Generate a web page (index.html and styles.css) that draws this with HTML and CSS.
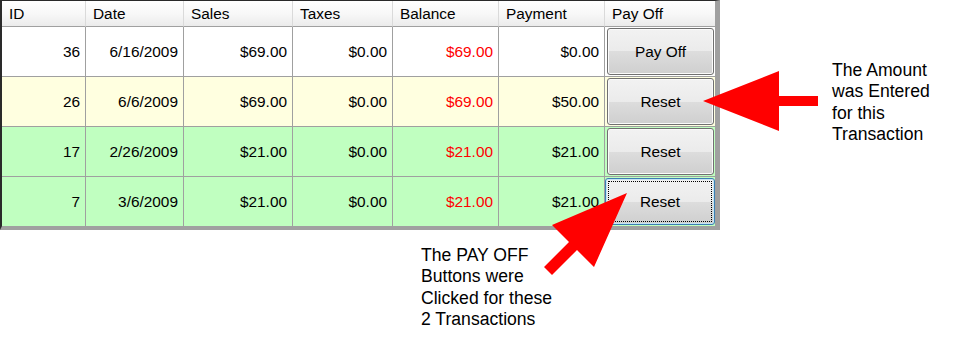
FILE: index.html
```html
<!DOCTYPE html>
<html lang="en">
<head>
<meta charset="utf-8">
<title>Transactions</title>
<link rel="stylesheet" href="styles.css">
</head>
<body>
<div class="canvas">
  <div class="top">
    <div class="grid">
      <div class="hd">ID</div>
      <div class="hd">Date</div>
      <div class="hd">Sales</div>
      <div class="hd">Taxes</div>
      <div class="hd">Balance</div>
      <div class="hd">Payment</div>
      <div class="hd last">Pay Off</div>

      <div class="cell white">36</div>
      <div class="cell white">6/16/2009</div>
      <div class="cell white">$69.00</div>
      <div class="cell white">$0.00</div>
      <div class="cell white red">$69.00</div>
      <div class="cell white">$0.00</div>
      <div class="cell white btncell"><button class="btn">Pay Off</button></div>

      <div class="cell yellow">26</div>
      <div class="cell yellow">6/6/2009</div>
      <div class="cell yellow">$69.00</div>
      <div class="cell yellow">$0.00</div>
      <div class="cell yellow red">$69.00</div>
      <div class="cell yellow">$50.00</div>
      <div class="cell yellow btncell"><button class="btn">Reset</button></div>

      <div class="cell green">17</div>
      <div class="cell green">2/26/2009</div>
      <div class="cell green">$21.00</div>
      <div class="cell green">$0.00</div>
      <div class="cell green red">$21.00</div>
      <div class="cell green">$21.00</div>
      <div class="cell green btncell"><button class="btn">Reset</button></div>

      <div class="cell green lastrow">7</div>
      <div class="cell green lastrow">3/6/2009</div>
      <div class="cell green lastrow">$21.00</div>
      <div class="cell green lastrow">$0.00</div>
      <div class="cell green lastrow red">$21.00</div>
      <div class="cell green lastrow">$21.00</div>
      <div class="cell green lastrow btncell"><button class="btn focused">Reset</button></div>
    </div>
    <p class="note note-amount">The Amount<br>was Entered<br>for this<br>Transaction</p>
  </div>
  <p class="note note-payoff">The PAY OFF<br>Buttons were<br>Clicked for these<br>2 Transactions</p>

  <svg class="arrows" width="953" height="339" viewBox="0 0 953 339" aria-hidden="true">
    <polygon fill="#ff0000" points="703,101 779,71 779,96 818,96 818,106 779,106 779,131"/>
    <polygon fill="#ff0000" points="627,193 552,225 569,242 544,267 552,275 577,250 594,267"/>
  </svg>
</div>
</body>
</html>
```

FILE: styles.css
```css
html, body {
  margin: 0;
  padding: 0;
  background: #ffffff;
}

body {
  font-family: "Liberation Sans", Arial, sans-serif;
  color: #000000;
}

.canvas {
  position: relative;
  width: 953px;
  height: 339px;
  overflow: hidden;
}

.top {
  display: flex;
  align-items: flex-start;
}

.grid {
  display: grid;
  grid-template-columns: 84px 98px 109px 100px 106px 106px 110px;
  grid-template-rows: 26px 50px 50px 50px 49px;
  border-top: 1px solid #2a2a2a;
  border-left: 2px solid #2a2a2a;
  border-right: 5px solid #a0a0a0;
  border-bottom: 4px solid #a0a0a0;
  font-size: 15.4px;
  flex: none;
}

.hd {
  box-sizing: border-box;
  display: flex;
  align-items: center;
  padding-left: 7px;
  background: linear-gradient(#ffffff 0%, #f7f7f7 55%, #ebebeb 100%);
  border-right: 1px solid #dadada;
  border-bottom: 1px solid #a0a0a0;
  white-space: nowrap;
}

.hd.last {
  border-right: none;
}

.cell {
  box-sizing: border-box;
  display: flex;
  align-items: center;
  justify-content: flex-end;
  padding-right: 5px;
  border-right: 1px solid #a0a0a0;
  border-bottom: 1px solid #a0a0a0;
  white-space: nowrap;
}

.cell.lastrow {
  border-bottom: none;
}

.white { background: #ffffff; }
.yellow { background: #ffffe0; }
.green { background: #c0ffc0; }

.red { color: #ff0000; }

.btncell {
  justify-content: flex-start;
  padding: 0 0 0 2px;
  border-right: none;
}

.btn {
  position: relative;
  box-sizing: border-box;
  width: 107px;
  height: 47px;
  margin: 0;
  padding: 0;
  font-family: "Liberation Sans", Arial, sans-serif;
  font-size: 15.4px;
  color: #000000;
  border: 1px solid #707070;
  border-radius: 3px;
  background: linear-gradient(#f2f2f2 0%, #ebebeb 50%, #dddddd 50%, #cfcfcf 100%);
  box-shadow: inset 0 0 0 1px #fbfbfb;
}

.btn.focused {
  width: 110px;
  margin-left: -2px;
  border-color: #3c7fb1;
  box-shadow: inset 0 0 0 1px #c4e5f6;
}

.btn.focused::after {
  content: "";
  position: absolute;
  left: 2px;
  top: 2px;
  right: 2px;
  bottom: 2px;
  border: 1px dotted #000000;
}

.note {
  margin: 0;
  font-size: 17.6px;
  line-height: 21.3px;
  color: #000000;
  white-space: nowrap;
}

.note-amount {
  margin-left: 112px;
  margin-top: 60px;
}

.note-payoff {
  margin-left: 421px;
  margin-top: 15px;
}

.arrows {
  position: absolute;
  left: 0;
  top: 0;
  pointer-events: none;
}
```
